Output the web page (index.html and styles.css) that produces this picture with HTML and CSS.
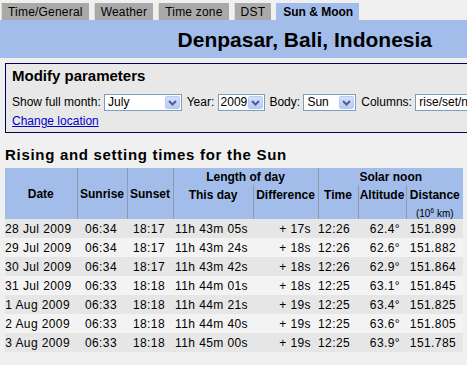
FILE: index.html
```html
<!DOCTYPE html>
<html lang="en">
<head>
  <meta charset="UTF-8" />
  <title>Sun &amp; Moon - Denpasar, Bali, Indonesia</title>
  <link rel="stylesheet" href="styles.css">
</head>
<body>
  <!-- Tabs -->
  <div class="tabs">
    <a class="tab">Time/General</a>
    <a class="tab">Weather</a>
    <a class="tab">Time zone</a>
    <a class="tab">DST</a>
    <a class="tab active">Sun &amp; Moon</a>
  </div>
  <div class="band">
    <h1>Denpasar, Bali, Indonesia</h1>
  </div>

  <!-- Modify parameters -->
  <div class="params">
    <h2>Modify parameters</h2>
    <div class="controls">
      Show full month: <span class="sel w-month"><span class="val">July</span><span class="arrow"><svg width="9" height="6" viewBox="0 0 9 6"><path d="M1 1 L4.5 4.5 L8 1" fill="none" stroke="#4d6185" stroke-width="2"/></svg></span></span>
      Year: <span class="sel w-year"><span class="val">2009</span><span class="arrow"><svg width="9" height="6" viewBox="0 0 9 6"><path d="M1 1 L4.5 4.5 L8 1" fill="none" stroke="#4d6185" stroke-width="2"/></svg></span></span>
      Body: <span class="sel w-body"><span class="val">Sun</span><span class="arrow"><svg width="9" height="6" viewBox="0 0 9 6"><path d="M1 1 L4.5 4.5 L8 1" fill="none" stroke="#4d6185" stroke-width="2"/></svg></span></span>
      Columns: <span class="sel w-cols"><span class="val">rise/set/noon</span><span class="arrow"><svg width="9" height="6" viewBox="0 0 9 6"><path d="M1 1 L4.5 4.5 L8 1" fill="none" stroke="#4d6185" stroke-width="2"/></svg></span></span>
    </div>
    <a class="link" href="#">Change location</a>
  </div>

  <!-- Results -->
  <h3>Rising and setting times for the Sun</h3>
  <table class="sun">
    <colgroup>
      <col style="width:72px"><col style="width:50px"><col style="width:46px"><col style="width:80px">
      <col style="width:65px"><col style="width:40px"><col style="width:48px"><col style="width:57px">
    </colgroup>
    <thead>
      <tr class="h1">
        <th rowspan="3" class="first">Date</th>
        <th rowspan="3">Sunrise</th>
        <th rowspan="3">Sunset</th>
        <th colspan="2">Length of day</th>
        <th colspan="3">Solar noon</th>
      </tr>
      <tr class="h2">
        <th>This day</th>
        <th>Difference</th>
        <th>Time</th>
        <th>Altitude</th>
        <th>Distance</th>
      </tr>
      <tr class="h3">
        <th></th><th></th><th></th><th></th>
        <th class="unit">(10<sup>6</sup> km)</th>
      </tr>
    </thead>
    <tbody>
      <tr><td>28 Jul 2009</td><td>06:34</td><td>18:17</td><td>11h 43m 05s</td><td>+ 17s</td><td>12:26</td><td>62.4°</td><td>151.899</td></tr>
      <tr><td>29 Jul 2009</td><td>06:34</td><td>18:17</td><td>11h 43m 24s</td><td>+ 18s</td><td>12:26</td><td>62.6°</td><td>151.882</td></tr>
      <tr><td>30 Jul 2009</td><td>06:34</td><td>18:17</td><td>11h 43m 42s</td><td>+ 18s</td><td>12:26</td><td>62.9°</td><td>151.864</td></tr>
      <tr><td>31 Jul 2009</td><td>06:33</td><td>18:18</td><td>11h 44m 01s</td><td>+ 18s</td><td>12:25</td><td>63.1°</td><td>151.845</td></tr>
      <tr><td>1 Aug 2009</td><td>06:33</td><td>18:18</td><td>11h 44m 21s</td><td>+ 19s</td><td>12:25</td><td>63.4°</td><td>151.825</td></tr>
      <tr><td>2 Aug 2009</td><td>06:33</td><td>18:18</td><td>11h 44m 40s</td><td>+ 19s</td><td>12:25</td><td>63.6°</td><td>151.805</td></tr>
      <tr><td>3 Aug 2009</td><td>06:33</td><td>18:18</td><td>11h 45m 00s</td><td>+ 19s</td><td>12:25</td><td>63.9°</td><td>151.785</td></tr>
    </tbody>
  </table>
</body>
</html>
```

FILE: styles.css
```css
/* Base */
html, body {
  overflow: hidden;
}
body {
  margin: 0;
  background: #f0f0f0;
  font-family: 'Liberation Sans', Arial, sans-serif;
  font-size: 12px;
  color: #000;
}

/* Tabs */
.tabs {
  display: flex;
  gap: 5px;
  padding: 3px 0 0 1px;
}
.tab {
  height: 17px;
  line-height: 18px;
  padding: 0 6px;
  background: #a9a9a9;
  border-left: 1px solid #dcdcdc;
  font-size: 12px;
  letter-spacing: 0.2px;
  color: #000;
  cursor: pointer;
}
.tab.active {
  background: #a3bdea;
  border-left-color: #a3bdea;
  font-weight: bold;
  letter-spacing: 0;
}
.band {
  background: #a3bdea;
  height: 38px;
  padding-right: 35px;
  text-align: right;
}
.band h1 {
  margin: 0;
  font-size: 21px;
  line-height: 40px;
}

/* Parameters box */
.params {
  display: inline-block;
  white-space: nowrap;
  margin: 5px 0 0 5px;
  padding: 3px 40px 3px 6px;
  background: #e8e8e8;
  border: 1px solid #000058;
}
.params h2 {
  margin: 0;
  font-size: 15px;
  line-height: 18px;
}
.controls {
  margin-top: 9px;
  height: 17px;
  line-height: 17px;
}
.sel {
  display: inline-flex;
  justify-content: space-between;
  align-items: center;
  box-sizing: border-box;
  height: 17px;
  margin-right: 1.5px;
  vertical-align: top;
  background: #fff;
  border: 1px solid #7f9db9;
  padding-left: 3px;
}
.sel .val {
  line-height: 15px;
}
.sel .arrow {
  flex: none;
  display: flex;
  align-items: center;
  justify-content: center;
  width: 15px;
  height: 13px;
  margin: 1px;
  background: linear-gradient(#d3e0fd, #b6cbf6);
  border: 1px solid #b8caf4;
  border-radius: 2px;
  box-sizing: border-box;
}
.w-month { width: 78px; }
.w-year { width: 47px; padding-left: 2px; }
.w-body { width: 53px; }
.w-cols { width: 100px; }
.link {
  display: block;
  margin-top: 3px;
  line-height: 15px;
  color: #0000cc;
}

/* Results */
h3 {
  margin: 13px 0 4px 5px;
  font-size: 15px;
  line-height: 18px;
  letter-spacing: 0.7px;
}
.sun {
  margin-left: 5px;
  width: 458px;
  table-layout: fixed;
  border-collapse: collapse;
}
.sun th {
  background: #a3bdea;
  font-size: 12px;
  padding: 0;
  border-left: 1px solid #8e99aa;
  white-space: nowrap;
}
.sun th.first {
  border-left: none;
}
.sun tr.h1 { height: 17px; }
.sun tr.h2 { height: 20px; }
.sun tr.h3 { height: 12px; }
.sun th.unit {
  font-weight: normal;
  font-size: 10px;
  line-height: 11px;
  vertical-align: top;
}
.sun th.unit sup {
  font-size: 7px;
}
.sun td {
  height: 19px;
  padding: 0 7px 0 0;
  text-align: right;
  white-space: nowrap;
  letter-spacing: 0.4px;
}
.sun td:nth-child(2) { padding-right: 10px; }
.sun td:nth-child(3) { padding-right: 8px; }
.sun td:nth-child(4) { padding-right: 5px; }
.sun td:nth-child(6) { padding-right: 8px; }
.sun td:nth-child(7) { padding-right: 6px; }
.sun tbody tr:nth-child(odd) { background: #e6e6e6; }
.sun tbody tr:nth-child(even) { background: #f3f3f3; }
```
